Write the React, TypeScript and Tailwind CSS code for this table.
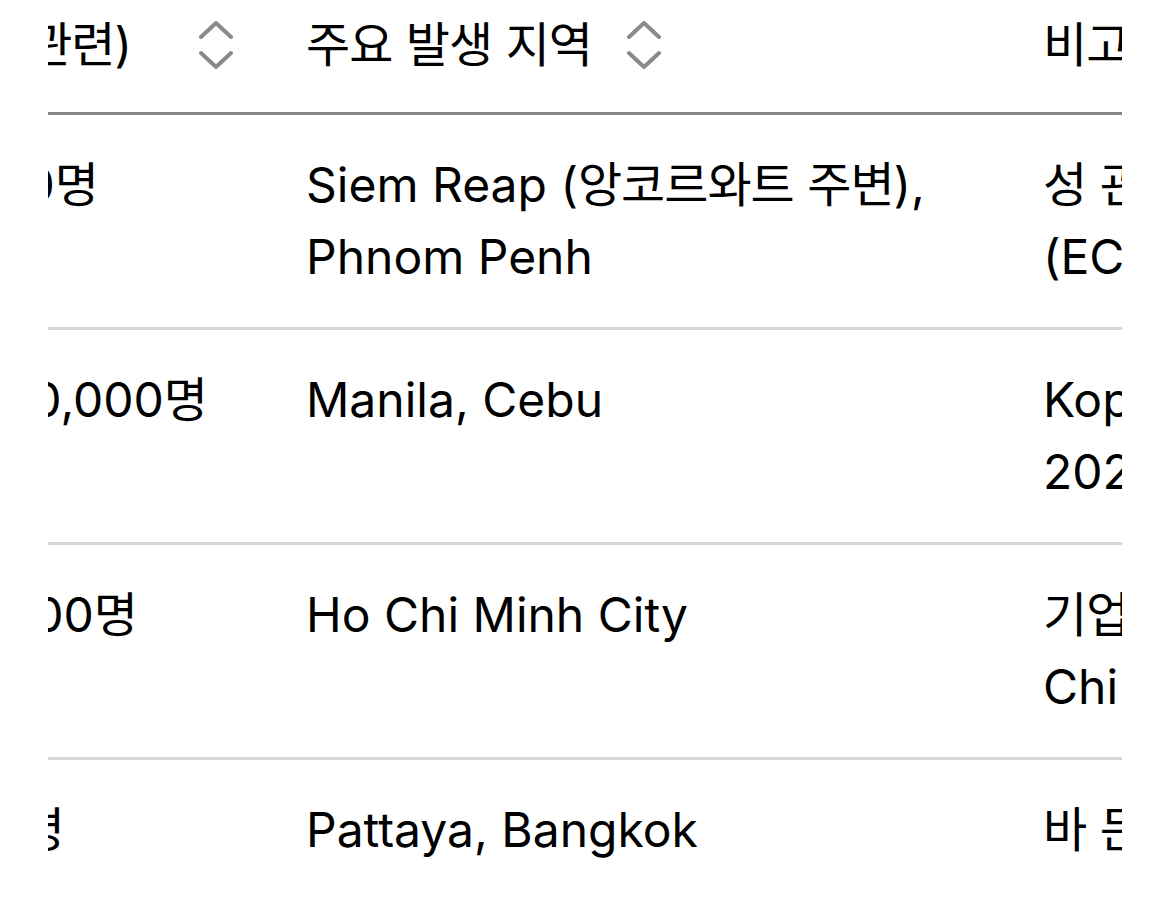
import React from "react";

const HANGUL = /([\u3131-\u318E\uAC00-\uD7A3]+)/;

function T({ children }: { children: string }) {
  const parts = children.split(HANGUL);
  return (
    <>
      {parts.map((p, i) =>
        /[\u3131-\u318E\uAC00-\uD7A3]/.test(p) ? (
          <span
            key={i}
            className="font-['Noto_Sans_CJK_KR',sans-serif] text-[48px] leading-none tracking-[-1px]"
          >
            {p}
          </span>
        ) : (
          <span key={i}>{p}</span>
        )
      )}
    </>
  );
}

function SortIcon() {
  return (
    <svg
      width="36"
      height="48"
      viewBox="0 0 36 48"
      fill="none"
      stroke="#8a8a8a"
      strokeWidth="4"
      strokeLinecap="round"
      strokeLinejoin="round"
      className="shrink-0"
    >
      <polyline points="3,16 18,2 33,16" />
      <polyline points="3,32 18,46 33,32" />
    </svg>
  );
}

type Row = {
  c1: string;
  c1w: string;
  c2: React.ReactNode;
  c3: string[];
};

export default function App() {
  const rows: Row[] = [
    {
      c1: "수백~1,000명",
      c1w: "w-[202px]",
      c2: (
        <>
          <T>{"Siem Reap (앙코르와트 주변),"}</T>
          <br />
          <T>{"Phnom Penh"}</T>
        </>
      ),
      c3: ["성 관광 실태 보고", "(ECPAT 2019)"],
    },
    {
      c1: "10,000~30,000명",
      c1w: "w-[311px]",
      c2: <T>{"Manila, Cebu"}</T>,
      c3: ["Kopino 아동 문제", "2023년 기준"],
    },
    {
      c1: "약 1,000명",
      c1w: "w-[241px]",
      c2: <T>{"Ho Chi Minh City"}</T>,
      c3: ["기업형 유흥업소 (Ho", "Chi Minh 중심)"],
    },
    {
      c1: "수백 명",
      c1w: "w-[168px]",
      c2: <T>{"Pattaya, Bangkok"}</T>,
      c3: ["바 든 유흥업소 중심"],
    },
  ];

  return (
    <div className="min-h-screen w-full overflow-hidden bg-white text-black font-['Inter','Noto_Sans_CJK_KR',sans-serif] text-[48px] leading-[72px]">
      <div className="ml-[48px] w-[1074px] overflow-hidden">
        <div className="-ml-[200px] w-[1600px]">
          {/* header */}
          <div className="grid grid-cols-[412px_737px_451px] border-b-[3px] border-[#858585] pt-[9px] pb-[31px]">
            <div className="flex items-center pl-[48px]">
              <div className="flex w-[236px] shrink-0 justify-end">
                <span className="whitespace-nowrap">
                  <T>{"피해 규모 (관련)"}</T>
                </span>
              </div>
              <div className="ml-[66px]">
                <SortIcon />
              </div>
            </div>
            <div className="flex items-center gap-[34px] pl-[46px]">
              <span className="whitespace-nowrap">
                <T>{"주요 발생 지역"}</T>
              </span>
              <SortIcon />
            </div>
            <div className="pl-[46px] whitespace-nowrap">
              <T>{"비고"}</T>
            </div>
          </div>

          {rows.map((r, idx) => (
            <div
              key={idx}
              className="grid grid-cols-[412px_737px_451px] border-b-[3px] border-[#d6d6d6] pt-[34px] pb-[34px]"
            >
              <div className="pl-[48px]">
                <div className={`flex justify-end ${r.c1w}`}>
                  <span className="whitespace-nowrap">
                    <T>{r.c1}</T>
                  </span>
                </div>
              </div>
              <div className="pl-[46px] whitespace-nowrap">{r.c2}</div>
              <div className="pl-[46px] whitespace-nowrap">
                {r.c3.map((line, i) => (
                  <React.Fragment key={i}>
                    {i > 0 && <br />}
                    <T>{line}</T>
                  </React.Fragment>
                ))}
              </div>
            </div>
          ))}
        </div>
      </div>
    </div>
  );
}
